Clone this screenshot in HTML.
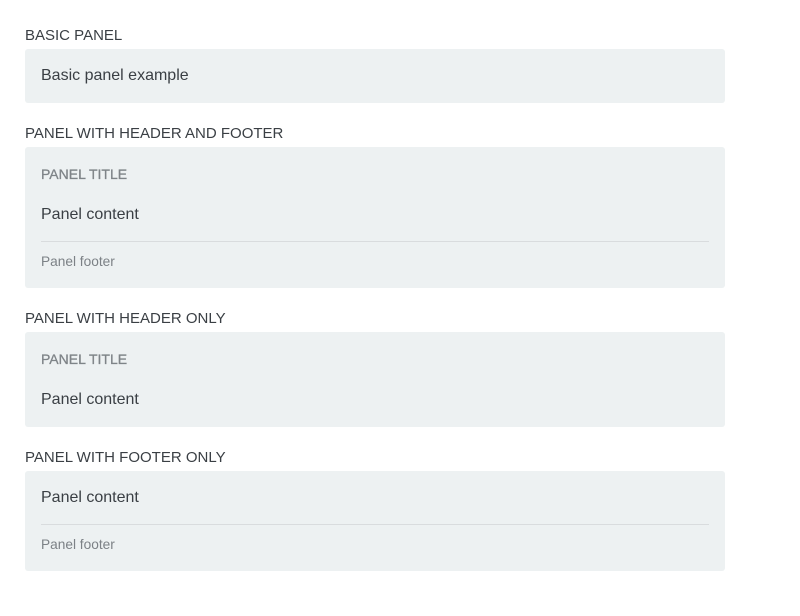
<!DOCTYPE html>
<html><head><meta charset="utf-8"><style>
body{margin:0;background:#fff;width:800px;height:616px;position:relative;font-family:"Liberation Sans",sans-serif;}
.a{position:absolute;white-space:nowrap;line-height:1;}
.lbl{left:25px;font-size:15px;color:#3a3f44;}
.p{position:absolute;left:25px;width:700px;background:#edf1f2;border-radius:3px;}
.t{left:41px;font-size:14px;color:#7f8488;-webkit-text-stroke:0.3px #7f8488;}
.c{left:41px;font-size:16px;color:#3a3f44;}
.f{left:41px;font-size:13.7px;color:#7c8186;}
.d{position:absolute;left:41px;width:668px;height:1px;background:#d9dcde;}
</style></head><body>
<div class="a lbl" style="top:28px">BASIC PANEL</div>
<div class="p" style="top:49px;height:54px"></div>
<div class="a c" style="top:68px">Basic panel example</div>

<div class="a lbl" style="top:126px">PANEL WITH HEADER AND FOOTER</div>
<div class="p" style="top:147px;height:141px"></div>
<div class="a t" style="top:167px">PANEL TITLE</div>
<div class="a c" style="top:207px">Panel content</div>
<div class="d" style="top:241px"></div>
<div class="a f" style="top:255px">Panel footer</div>

<div class="a lbl" style="top:311px">PANEL WITH HEADER ONLY</div>
<div class="p" style="top:332px;height:95px"></div>
<div class="a t" style="top:352px">PANEL TITLE</div>
<div class="a c" style="top:392px">Panel content</div>

<div class="a lbl" style="top:450px">PANEL WITH FOOTER ONLY</div>
<div class="p" style="top:471px;height:100px"></div>
<div class="a c" style="top:490px">Panel content</div>
<div class="d" style="top:524px"></div>
<div class="a f" style="top:538px">Panel footer</div>
</body></html>
